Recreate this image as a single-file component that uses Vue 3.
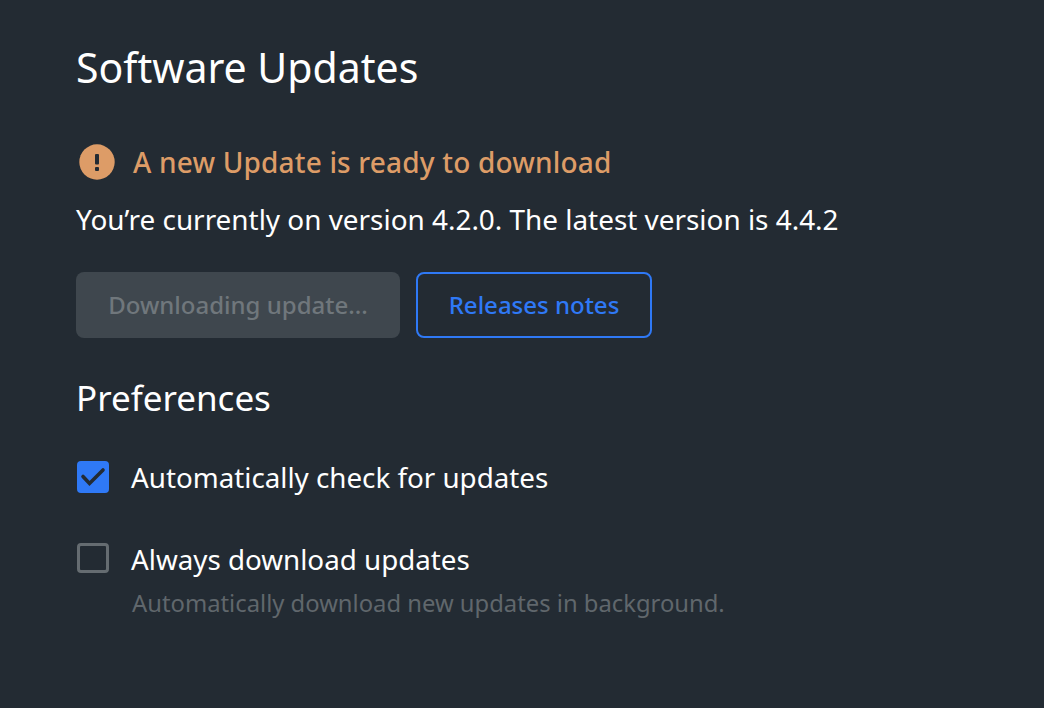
<script setup>
import { ref } from 'vue'

const prefs = ref([
  { label: 'Automatically check for updates', checked: true, hint: '' },
  { label: 'Always download updates', checked: false, hint: 'Automatically download new updates in background.' }
])
</script>

<template>
  <div class="page">
    <h1>Software Updates</h1>

    <div class="notice">
      <svg class="notice-icon" width="36" height="36" viewBox="0 0 36 36">
        <circle cx="18" cy="18" r="17.7" fill="#dd9c67" />
        <rect x="16" y="10" width="4" height="10.5" rx="1" fill="#232b33" />
        <rect x="16" y="23" width="4" height="4" rx="1" fill="#232b33" />
      </svg>
      <span>A new Update is ready to download</span>
    </div>
    <p class="version">You’re currently on version 4.2.0. The latest version is 4.4.2</p>

    <div class="actions">
      <button class="btn disabled" disabled>Downloading update...</button>
      <button class="btn outline">Releases notes</button>
    </div>

    <h2>Preferences</h2>

    <div class="pref" v-for="p in prefs" :key="p.label">
      <div class="pref-row">
        <span class="box" :class="{ on: p.checked }">
          <svg v-if="p.checked" width="32" height="32" viewBox="0 0 32 32">
            <path d="M6 15.5 L12.5 22.5 L26 9" fill="none" stroke="#232b33" stroke-width="3.6" stroke-linecap="round" />
          </svg>
        </span>
        <span class="label">{{ p.label }}</span>
      </div>
      <div class="hint" v-if="p.hint">{{ p.hint }}</div>
    </div>
  </div>
</template>

<style>
html, body {
  background: #232b33;
}
</style>

<style scoped>
.page {
  box-sizing: border-box;
  width: 1044px;
  height: 708px;
  padding: 40px 76px 0;
  background: #232b33;
  color: #fff;
  font-family: "Noto Sans", "Open Sans", sans-serif;
  overflow: hidden;
}

h1 {
  margin: 0;
  font-size: 41px;
  line-height: 54px;
  font-weight: 400;
}

.notice {
  display: flex;
  align-items: center;
  gap: 18px;
  margin-top: 50px;
  margin-left: 3px;
  color: #dd9c67;
  font-size: 28px;
  font-weight: 500;
  letter-spacing: 0.18px;
  line-height: 36px;
}

.version {
  margin: 21px 0 0;
  font-size: 27.9px;
  line-height: 36px;
}

.actions {
  display: flex;
  gap: 16px;
  margin-top: 35px;
}

.btn {
  height: 66px;
  padding-bottom: 2px;
  border-radius: 8px;
  font-family: inherit;
  font-size: 24px;
  font-weight: 500;
  box-sizing: border-box;
}

.disabled {
  width: 324px;
  background: #3f474e;
  border: none;
  color: #70777c;
}

.outline {
  width: 236px;
  background: transparent;
  border: 2px solid #2f79f6;
  color: #2f79f6;
}

h2 {
  margin: 38px 0 0;
  font-size: 35px;
  line-height: 44px;
  font-weight: 400;
}

.pref-row {
  display: flex;
  align-items: center;
  gap: 22px;
  height: 36px;
}

.pref {
  margin-top: 39px;
}

.pref + .pref {
  margin-top: 46px;
}

.box {
  box-sizing: border-box;
  width: 32px;
  height: 30px;
  margin-left: 1px;
  margin-bottom: 2px;
  border: 3px solid #656c71;
  border-radius: 4px;
  display: flex;
  align-items: center;
  justify-content: center;
}

.box.on {
  height: 32px;
  margin-bottom: 0;
  background: #2f79f6;
  border: none;
}

.label {
  font-size: 27.75px;
  line-height: 36px;
}

.hint {
  margin: 10px 0 0 56px;
  font-size: 23.8px;
  line-height: 32px;
  color: #60676c;
}
</style>
